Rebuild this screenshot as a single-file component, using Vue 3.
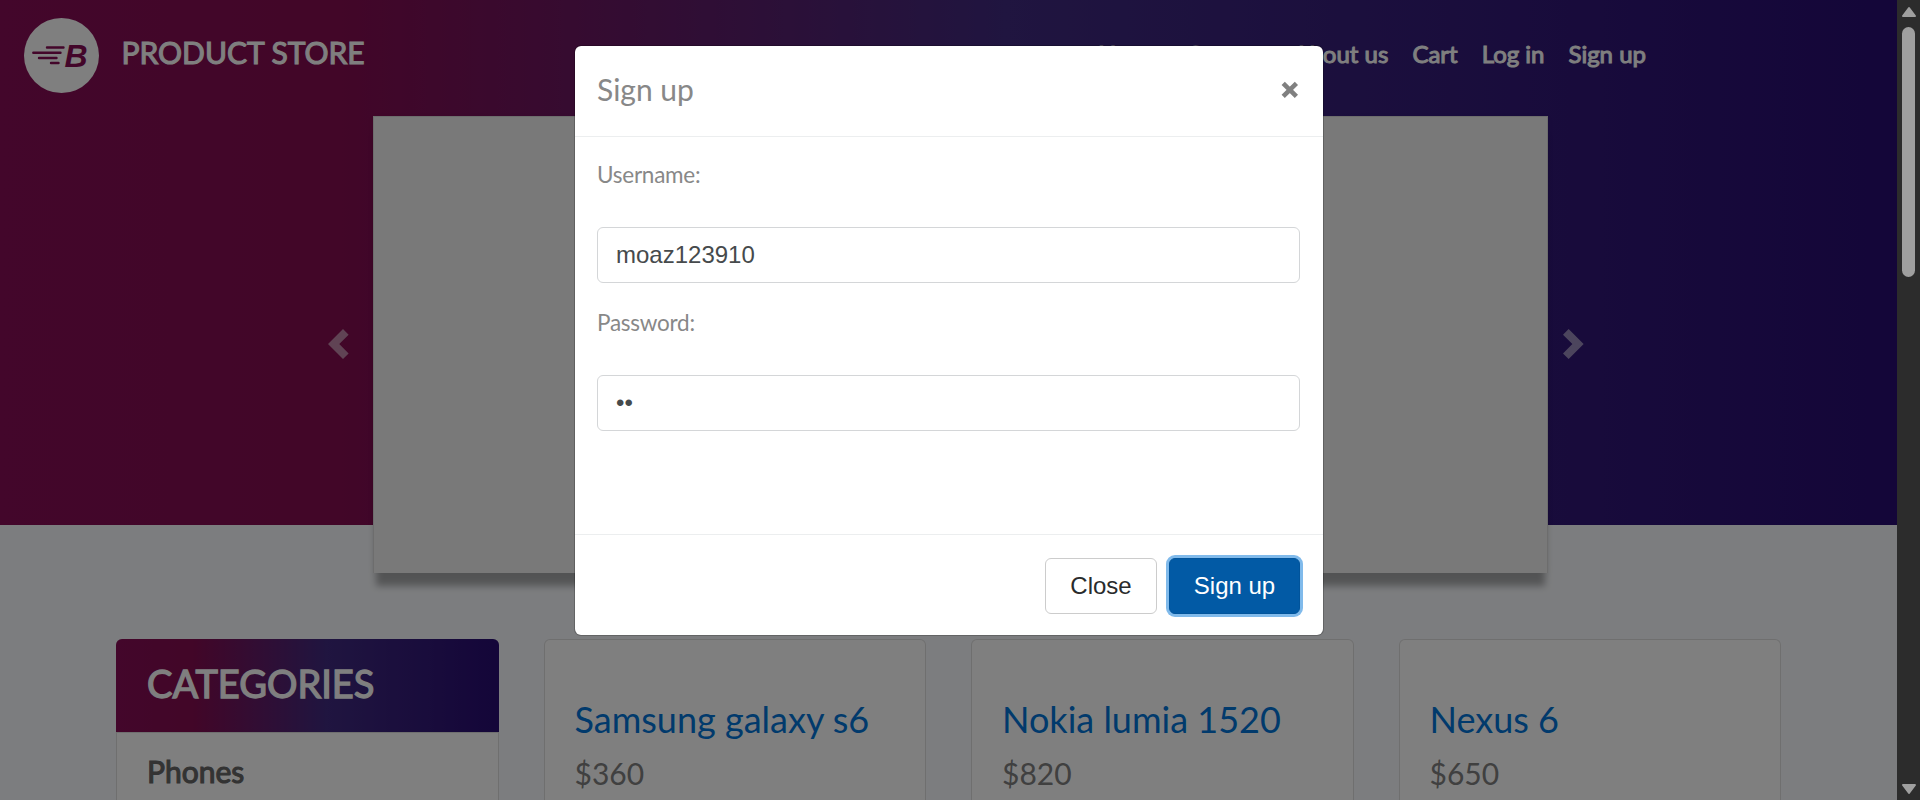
<script setup>
import { ref } from 'vue'

const links = ['Home', 'Contact', 'About us', 'Cart', 'Log in', 'Sign up']
const products = [
  { name: 'Samsung galaxy s6', price: '$360' },
  { name: 'Nokia lumia 1520', price: '$820' },
  { name: 'Nexus 6', price: '$650' },
]
const username = ref('moaz123910')
const password = ref('••')
</script>

<template>
  <div class="screen">
    <div class="page">
      <header class="hero">
        <nav class="navbar">
          <a class="brand">
            <svg class="logo" width="75" height="75" viewBox="0 0 75 75">
              <circle cx="37.5" cy="37.5" r="37.5" fill="#fff" />
              <g stroke="#860c54" stroke-width="2.4" stroke-linecap="round">
                <path d="M23 29.5H39.5M9.3 34.8H36.5M15 40H32.5M27 45H34.5" />
              </g>
              <text x="40.5" y="49" class="logo-letter">B</text>
            </svg>
            <span class="brand-name">PRODUCT STORE</span>
          </a>
          <ul class="links">
            <li v-for="l in links" :key="l">{{ l }}</li>
          </ul>
        </nav>
        <div class="carousel">
          <svg class="arrow" width="30" height="30" viewBox="0 0 8 8">
            <path d="M4 0l-4 4 4 4 1.5-1.5-2.5-2.5 2.5-2.5-1.5-1.5z" fill="#fff" />
          </svg>
          <div class="slide"></div>
          <svg class="arrow" width="30" height="30" viewBox="0 0 8 8">
            <path d="M1.5 0l-1.5 1.5 2.5 2.5-2.5 2.5 1.5 1.5 4-4-4-4z" fill="#fff" />
          </svg>
        </div>
      </header>
      <main class="grid">
        <aside class="card">
          <h2 class="cat-title"><span>CATEGORIES</span></h2>
          <p class="cat-item"><span>Phones</span></p>
        </aside>
        <article v-for="p in products" :key="p.name" class="card product">
          <h4><span>{{ p.name }}</span></h4>
          <p><span>{{ p.price }}</span></p>
        </article>
      </main>
    </div>

    <div class="scrollbar">
      <svg width="16" height="12" viewBox="0 0 16 12"><path d="M8 2L14 10H2Z" /></svg>
      <div class="thumb"></div>
      <svg class="down" width="16" height="12" viewBox="0 0 16 12"><path d="M8 10L14 2H2Z" /></svg>
    </div>

    <div class="backdrop">
      <form class="modal" @submit.prevent>
        <div class="modal-head">
          <h5><span>Sign up</span></h5>
          <svg width="18" height="18" viewBox="0 0 18 18">
            <path d="M2.2 2.4L15.4 15.4M15.4 2.4L2.2 15.4" stroke="#808080" stroke-width="4.6" />
          </svg>
        </div>
        <div class="modal-body">
          <label><span>Username:</span></label>
          <input v-model="username" type="text" />
          <label><span>Password:</span></label>
          <input v-model="password" type="text" class="secret" />
        </div>
        <div class="modal-foot">
          <button type="button" class="btn">Close</button>
          <button type="button" class="btn primary">Sign up</button>
        </div>
      </form>
    </div>
  </div>
</template>

<style>
body {
  margin: 0;
  overflow: hidden;
}
</style>

<style scoped>
* {
  box-sizing: border-box;
}
.screen {
  position: relative;
  width: 1920px;
  height: 800px;
  overflow: hidden;
  display: flex;
  font-family: Lato, sans-serif;
}
.page {
  width: 1897px;
  height: 800px;
  overflow: hidden;
  background: #f9fbfe;
}
.hero {
  height: 525px;
  background: linear-gradient(90deg, #860c56 0%, #840c50 18%, #402a80 53%, #280c72 100%);
}
.navbar {
  height: 116px;
  display: flex;
  justify-content: space-between;
  padding: 18px 251px 0 24px;
}
.brand {
  display: flex;
  gap: 22px;
}
.logo-letter {
  font: italic bold 32px "Liberation Sans", Arial, sans-serif;
  fill: #860c54;
}
.brand-name {
  line-height: 36px;
  padding: 16px 0 0 0.5px;
  font-size: 30px;
  -webkit-text-stroke: 1.1px currentColor;
  color: #fff;
}
.links {
  display: flex;
  gap: 24px;
  margin: 0;
  padding: 21px 0 0;
  list-style: none;
  font-size: 24px;
  line-height: 30px;
  -webkit-text-stroke: 1px currentColor;
  color: #fff;
}
.carousel {
  display: flex;
  align-items: center;
  height: 457px;
  padding-left: 328px;
}
.arrow {
  opacity: 0.5;
  margin-bottom: 2px;
}
.slide {
  width: 1175px;
  height: 457px;
  margin: 0 15px;
  background: #f3f3f3;
  border: 1px solid rgba(0, 0, 0, 0.1);
  border-width: 1px 1px 0;
  box-shadow: 0 16px 7px -3px rgba(0, 0, 0, 0.32), 0 2px 8px rgba(0, 0, 0, 0.04);
}
.grid {
  display: grid;
  grid-template-columns: repeat(4, 1fr);
  gap: 45px;
  padding: 114px 116px 0;
}
.card {
  height: 400px;
  background: #fff;
  border: 1px solid rgba(0, 0, 0, 0.125);
  border-radius: 6px;
}
h2, h4, h5, p {
  margin: 0;
}
.cat-title {
  height: 93px;
  margin: -1px -1px 0;
  padding: 18px 0 0 31px;
  border-radius: 6px 6px 0 0;
  background: linear-gradient(90deg, #860c56 0%, #840c50 20%, #402a80 55%, #280c72 100%);
  font-size: 38px;
  line-height: 52px;
  font-weight: 400;
  -webkit-text-stroke: 1.3px currentColor;
  color: #fff;
}
.cat-item {
  border-top: 1px solid rgba(0, 0, 0, 0.125);
  padding: 20px 30px;
  font-size: 30px;
  line-height: 36px;
  -webkit-text-stroke: 1.1px currentColor;
  color: #666;
}
.product {
  padding: 57px 30px 0;
}
.product h4 {
  font-size: 36px;
  line-height: 44px;
  font-weight: 400;
  color: #0275d8;
}
.product p {
  margin-top: 14px;
  font-size: 30px;
  line-height: 36px;
  color: #808080;
}
.scrollbar {
  position: relative;
  z-index: 2;
  width: 23px;
  height: 800px;
  display: flex;
  flex-direction: column;
  align-items: center;
  padding: 6px 0 5px;
  background: #2c2c2c;
}
.scrollbar path {
  fill: #9f9f9f;
  stroke: #9f9f9f;
  stroke-width: 2;
  stroke-linejoin: round;
}
.thumb {
  width: 13px;
  height: 250px;
  margin-top: 9px;
  border-radius: 7px;
  background: #9f9f9f;
}
.down {
  margin-top: auto;
}
.backdrop {
  position: absolute;
  inset: 0 23px 0 0;
  background: rgba(0, 0, 0, 0.5);
}
.modal {
  width: 750px;
  height: 591px;
  margin: 45px auto 0;
  border: 1px solid rgba(0, 0, 0, 0.2);
  border-radius: 7px;
  background: #fff;
  background-clip: padding-box;
}
.modal-head {
  height: 91px;
  display: flex;
  justify-content: space-between;
  padding: 21px 22.5px;
  border-bottom: 1px solid #eceeef;
}
.modal-head svg {
  margin-top: 14px;
  margin-right: 1.5px;
}
h5 {
  font-size: 30px;
  line-height: 44px;
  font-weight: 400;
  color: #888;
}
.modal-body {
  height: 397px;
  padding: 22px 22.5px;
  display: flex;
  flex-direction: column;
}
label {
  height: 68px;
  line-height: 32px;
  font-size: 22.5px;
  letter-spacing: -0.25px;
  color: #888;
}
input {
  height: 56px;
  margin-bottom: 24px;
  padding: 0 18px;
  border: 1px solid #d4d6d8;
  border-radius: 6px;
  font: 24px "Liberation Sans", Arial, sans-serif;
  color: #464a4c;
  outline: none;
}
.modal-foot {
  height: 101px;
  display: flex;
  justify-content: flex-end;
  gap: 12px;
  padding: 23px 22.5px 0;
  border-top: 1px solid #eceeef;
}
.btn {
  height: 56px;
  width: 112px;
  padding: 0;
  border: 1px solid #ccc;
  border-radius: 6px;
  background: #fff;
  font: 24px "Liberation Sans", Arial, sans-serif;
  color: #292b2c;
}
.primary {
  width: 131px;
  color: #fff;
  background: #025aa5;
  border-color: #01549b;
  box-shadow: 0 0 0 3px #80baeb;
}
</style>
